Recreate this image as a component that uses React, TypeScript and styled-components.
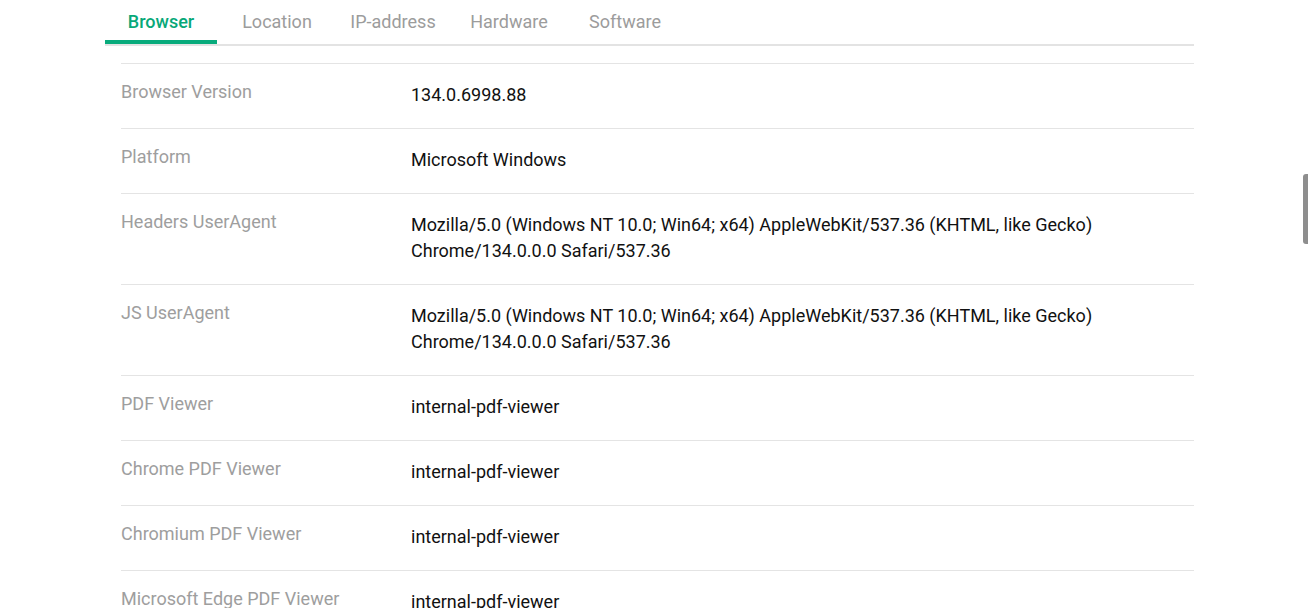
import React from 'react';
import styled, {createGlobalStyle} from 'styled-components';

const GlobalStyle = createGlobalStyle`
  html, body {
    margin: 0;
    padding: 0;
    background: #fff;
    overflow: hidden;
    height: 100%;
  }
  body {
    font-family: Roboto, "Liberation Sans", Arial, sans-serif;
    -webkit-font-smoothing: antialiased;
  }
`

const Page = styled.div`
  width: 1089px;
  margin-left: 105px;
`

const TabBar = styled.nav`
  display: flex;
  gap: 4px;
  border-bottom: 2px solid #e3e3e3;
`

const Tab = styled.div<{active?: boolean}>`
  width: 112px;
  box-sizing: border-box;
  padding-top: 9px;
  height: 44px;
  text-align: center;
  font-size: 18px;
  line-height: 26px;
  font-weight: ${p => (p.active ? 500 : 400)};
  color: ${p => (p.active ? '#08a878' : '#9c9c9c')};
  border-bottom: 4px solid ${p => (p.active ? '#08ab7c' : 'transparent')};
`

const Table = styled.div`
  margin: 17px 0 0 16px;
`

const Row = styled.div`
  display: grid;
  grid-template-columns: 290px 1fr;
  padding: 18px 0 20px;
  border-top: 1px solid #e4e4e4;
`

const Label = styled.div`
  font-size: 18px;
  line-height: 20px;
  color: #9e9e9e;
`

const Value = styled.div`
  font-size: 18px;
  line-height: 26px;
  color: #111;
`

const ScrollThumb = styled.div`
  position: fixed;
  right: 0;
  top: 174px;
  width: 5px;
  height: 70px;
  border-radius: 3px 0 0 3px;
  background: #8e8e8e;
`

const tabs = ['Browser', 'Location', 'IP-address', 'Hardware', 'Software'];

const ua = 'Mozilla/5.0 (Windows NT 10.0; Win64; x64) AppleWebKit/537.36 (KHTML, like Gecko) Chrome/134.0.0.0 Safari/537.36';

const rows: [string, string][] = [
    ['Browser Version', '134.0.6998.88'],
    ['Platform', 'Microsoft Windows'],
    ['Headers UserAgent', ua],
    ['JS UserAgent', ua],
    ['PDF Viewer', 'internal-pdf-viewer'],
    ['Chrome PDF Viewer', 'internal-pdf-viewer'],
    ['Chromium PDF Viewer', 'internal-pdf-viewer'],
    ['Microsoft Edge PDF Viewer', 'internal-pdf-viewer'],
];

const App = () => {
    return (
        <>
            <GlobalStyle/>
            <Page>
                <TabBar>
                    {tabs.map((t, i) => (
                        <Tab key={t} active={i === 0}>{t}</Tab>
                    ))}
                </TabBar>
                <Table>
                    {rows.map(([label, value]) => (
                        <Row key={label}>
                            <Label>{label}</Label>
                            <Value>
                                {value === ua ? (
                                    <>
                                        Mozilla/5.0 (Windows NT 10.0; Win64; x64) AppleWebKit/537.36 (KHTML, like Gecko)
                                        <br/>
                                        Chrome/134.0.0.0 Safari/537.36
                                    </>
                                ) : value}
                            </Value>
                        </Row>
                    ))}
                </Table>
            </Page>
            <ScrollThumb/>
        </>
    );
};

export default App;
